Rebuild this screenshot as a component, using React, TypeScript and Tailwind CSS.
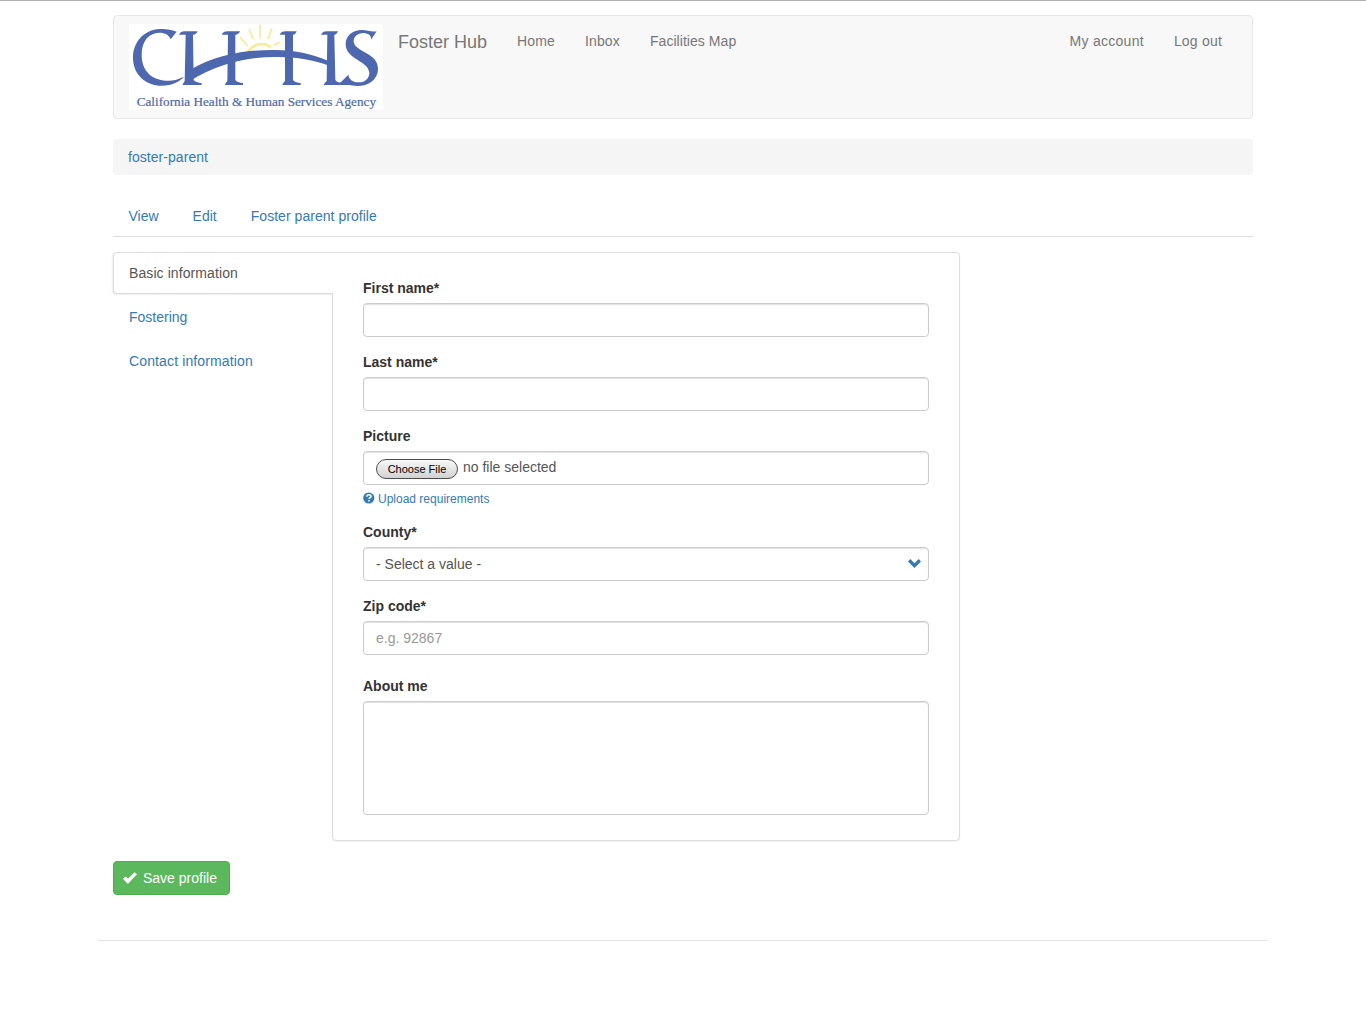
import React from "react";

const blue = "#337ab7";

function Logo() {
  return (
    <svg viewBox="72 72 762 258" className="mt-[8px] h-[86px] w-[254px] shrink-0" role="img" aria-label="CHHS">
      <rect x="72" y="72" width="762" height="258" fill="#fff" />
      <g stroke="#fbea8f" strokeWidth="6" fill="none" strokeLinecap="round">
        <path d="M431 154C444 132 472 126 494 139" strokeWidth="8" />
        <path d="M407 113L428 138M433 88L443 115M465 76V113M500 87L489 116M523 127L508 135" strokeWidth="5" />
      </g>
      <g fill="#4d68ae">
        <path d="M215 95C197 88 181 86 165 87C115 89 84 128 84 173C84 225 124 257 170 257C202 257 224 244 237 230C216 240 202 243 184 242C138 240 110 211 110 165C110 123 131 99 163 98C181 98 191 104 197 118Z" />
        <path d="M222 104C226 96 231 94 239 94H278C275 101 271 104 264 104L266 240C270 246 279 248 290 249V255H233C234 249 237 247 239 243L242 104Z" />
        <path d="M350 104C354 96 359 94 367 94H405C402 101 398 104 391 104V240C395 246 403 248 414 249V255H360C361 249 365 247 367 243L369 104Z" />
        <path d="M524 104C528 96 533 94 541 94H575C572 101 570 104 564 104V240C568 246 576 248 587 249V255H532C533 249 537 247 540 243V104Z" />
        <path d="M648 104C652 96 657 94 665 94H699C696 101 693 104 688 104L691 240C695 246 702 249 714 248L735 253V255H656C657 249 662 247 665 243L667 104Z" />
        <path d="M256 209C335 163 425 149 510 150C570 150 626 163 675 185V198C622 178 570 170 510 171C418 171 333 195 256 242Z" />
        <path d="M815 94L798 119C800 108 792 100 776 99C757 99 746 110 746 124C748 157 819 157 819 206C819 239 791 258 756 258C733 258 720 247 702 252L730 224C732 239 744 247 762 247C781 247 793 234 793 218C790 181 722 179 722 132C722 107 743 90 771 90C788 90 799 97 815 94Z" />
        <text x="95" y="318" fontSize="39" fontFamily="'Liberation Serif', serif" textLength="718" lengthAdjust="spacingAndGlyphs" stroke="#4d68ae" strokeWidth="0.6">
          California Health &amp; Human Services Agency
        </text>
      </g>
    </svg>
  );
}

const inputCls =
  "block w-full rounded-[4px] border border-[#ccc] bg-white px-3 shadow-[inset_0_1px_1px_rgba(0,0,0,0.12)] outline-none";

function Label({ children, required }: { children: React.ReactNode; required?: boolean }) {
  return (
    <label className="mb-[5px] block font-bold leading-5 text-[#333]">
      {children}
      {required && <span className="tracking-[-0.5px]">*</span>}
    </label>
  );
}

export default function App() {
  return (
    <div
      className="min-h-[1012px] border-t border-[#b0b0b0] bg-white pt-[14px] text-[14px] leading-5 text-[#333]"
      style={{ fontFamily: "'Liberation Sans', Arial, sans-serif" }}
    >
      <div className="mx-auto w-[1140px]">
        <nav className="flex h-[104px] rounded-[4px] border border-[#e7e7e7] bg-[#f8f8f8] pr-[30px] pl-[15px] text-[#777]">
          <Logo />
          <a className="mt-[16px] ml-[15px] w-[104px] text-[18px] whitespace-nowrap">Foster Hub</a>
          <div className="mt-[15px] ml-[15px] flex gap-[30px]">
            <a className="tracking-[0.15px]">Home</a>
            <a className="tracking-[0.15px]">Inbox</a>
            <a className="tracking-[0.05px]">Facilities Map</a>
          </div>
          <div className="mt-[15px] ml-auto flex gap-[30px]">
            <a className="tracking-[0.27px]">My account</a>
            <a className="tracking-[0.2px]">Log out</a>
          </div>
        </nav>

        <div className="mt-5 h-9 rounded-[4px] bg-[#f5f5f5] px-[15px] py-2 tracking-[0.05px] text-[#337ab7]">foster-parent</div>

        <div className="mt-5 flex h-[42px] gap-[34px] border-b border-[#ddd] px-[15.5px] pt-[11px] text-[#337ab7]">
          <a>View</a>
          <a>Edit</a>
          <a className="tracking-[0.04px]">Foster parent profile</a>
        </div>

        <div className="mt-[15px] flex items-start">
          <div className="relative z-10 -mr-px w-[220px] text-[#337ab7]">
            <div className="h-[42px] rounded-l-[4px] border border-r-0 border-[#ddd] bg-white px-[15px] py-[10px] tracking-[0.09px] text-[#555] shadow-[-1px_1px_2px_rgba(0,0,0,0.07)]">
              Basic information
            </div>
            <div className="mt-[2px] h-[42px] px-4 py-[11px]">Fostering</div>
            <div className="mt-[2px] h-[42px] px-4 py-[11px] tracking-[0.13px]">Contact information</div>
          </div>
          <div className="h-[589px] w-[628px] rounded-[4px] rounded-tl-none border border-[#ddd] px-[30px] pt-[25px] shadow-[0_1px_2px_rgba(0,0,0,0.06)]">
            <Label required>First name</Label>
            <input className={inputCls + " h-[34px]"} />
            <div className="h-[15px]" />
            <Label required>Last name</Label>
            <input className={inputCls + " h-[34px]"} />
            <div className="h-[15px]" />
            <Label>Picture</Label>
            <div className={inputCls + " flex h-[34px] text-[#555]"}>
              <button className="mt-[7px] h-5 w-[82px] rounded-full border border-[#4c4c4c] bg-linear-to-b from-[#f8f8f8] to-[#d2d2d2] text-[11px] leading-[18px] text-black">
                Choose File
              </button>
              <span className="mt-[5px] ml-[5px]">no file selected</span>
            </div>
            <div className="mt-1 flex h-5 items-center text-[12px] text-[#337ab7]">
              <svg viewBox="0 0 12 12" className="-mt-[2px] mr-[3px] h-3 w-3">
                <circle cx="5.8" cy="6" r="5.6" fill={blue} />
                <path d="M3.9 4.7C3.9 2 8 2.1 8 4.5C8 5.8 6 5.7 6 7.1M6 8V9.4" fill="none" stroke="#fff" strokeWidth="1.6" />
              </svg>
              Upload requirements
            </div>
            <div className="h-[13px]" />
            <Label required>County</Label>
            <div className={inputCls + " flex h-[34px] items-center justify-between pr-[7px] text-[#555]"}>
              - Select a value -
              <svg viewBox="0 0 13 9" className="-mt-[2px] h-[9px] w-[13px]">
                <path d="M0 2.4L2.3 .1L6.5 4.3L10.7 .1L13 2.4L6.5 8.9Z" fill={blue} />
              </svg>
            </div>
            <div className="h-[15px]" />
            <Label required>Zip code</Label>
            <input placeholder="e.g. 92867" className={inputCls + " h-[34px] placeholder:text-[#999]"} />
            <div className="h-[21px]" />
            <Label>About me</Label>
            <textarea className={inputCls + " h-[114px] resize-none"} />
          </div>
        </div>

        <button className="mt-5 flex h-[34px] w-[117px] items-center rounded-[4px] border border-[#4cae4c] bg-[#5cb85c] pl-[9px] text-white">
          <svg viewBox="0 0 14 12" className="-mt-px mr-[6px] h-3 w-[14px]">
            <path d="M0 6.7L2.6 4.5L5.1 6.6L11.6 .2L14 2.3L5.3 11.6H4.4Z" fill="#fff" />
          </svg>
          Save profile
        </button>
      </div>
      <div className="mx-auto mt-[45px] w-[1170px] border-t border-[#e5e5e5]" />
    </div>
  );
}
